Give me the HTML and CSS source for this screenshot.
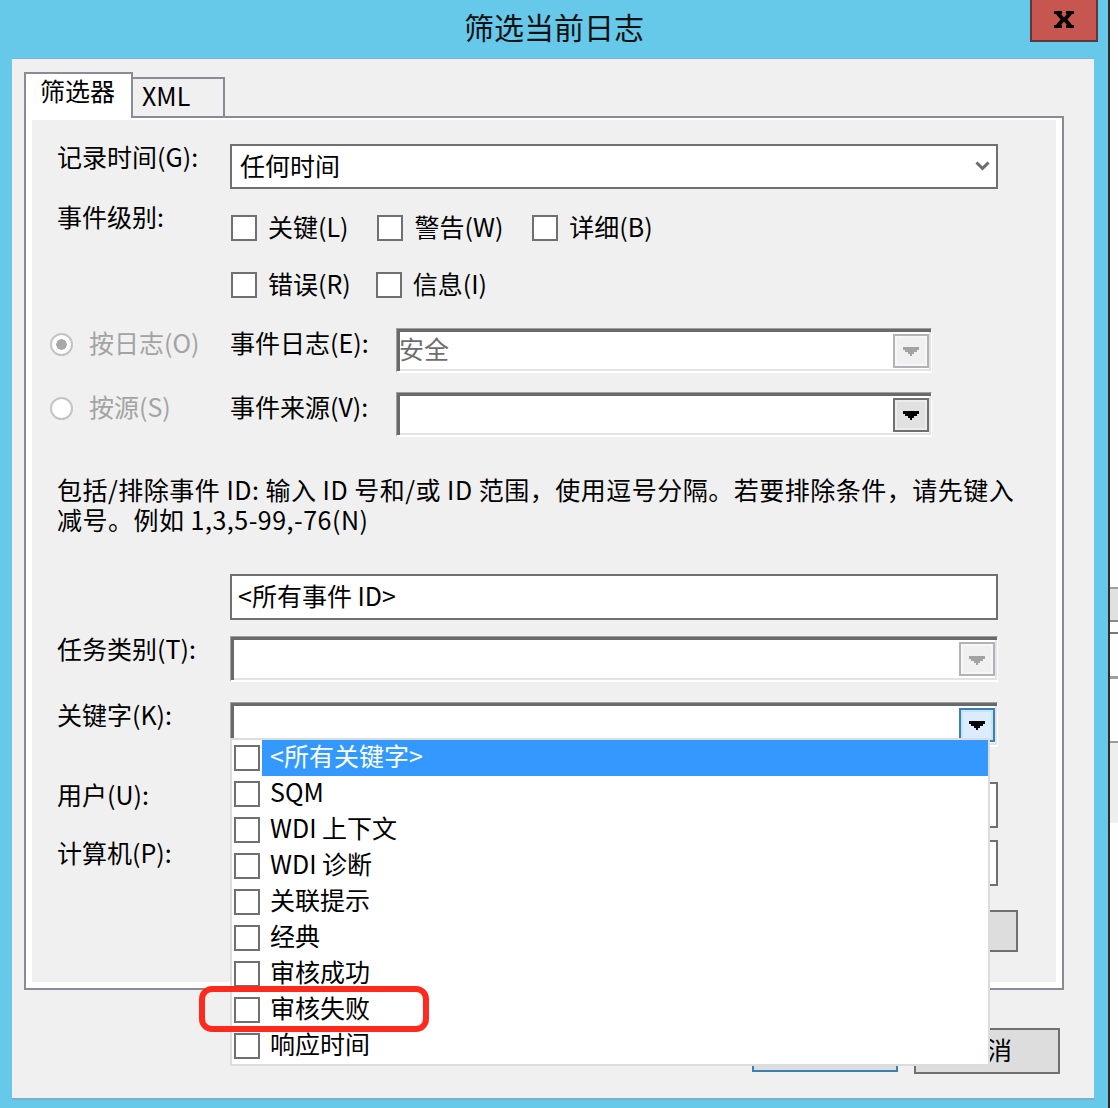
FILE: index.html
```html
<!DOCTYPE html>
<html lang="zh-CN">
<head>
<meta charset="utf-8">
<title>筛选当前日志</title>
<link rel="stylesheet" href="styles.css">
</head>
<body>
<div class="screen">
  <div class="window">
    <div class="titlebar">
      <div class="title">筛选当前日志</div>
      <div class="close">
        <svg width="20" height="17" viewBox="0 0 20 17"><path d="M0 0h8v3h-1l3 3.5 3-3.5h-1v-3h8v3h-2l-4.5 5.5 4.5 5.5h2v3h-8v-3h1l-3-3.5-3 3.5h1v3h-8v-3h2l4.5-5.5-4.5-5.5h-2z" fill="#000"/></svg>
      </div>
    </div>
    <div class="frame">
      <div class="client">
        <div class="tabs">
          <div class="tab active">筛选器</div>
          <div class="tab xml">XML</div>
        </div>
        <div class="panel">
          <div class="content">
            <div class="row r-time">
              <div class="lbl">记录时间(G):</div>
              <div class="combo">
                <span class="val">任何时间</span>
                <svg class="chev" width="15" height="11" viewBox="0 0 15 11"><path d="M1.5 1.5l6 6 6-6" stroke="#6a6a6a" stroke-width="3" fill="none"/></svg>
              </div>
            </div>
            <div class="row r-level">
              <div class="lbl">事件级别:</div>
              <div class="checks">
                <div class="checkline">
                  <div class="chk"><span class="box"></span><span class="ct">关键(L)</span></div>
                  <div class="chk"><span class="box"></span><span class="ct">警告(W)</span></div>
                  <div class="chk"><span class="box"></span><span class="ct">详细(B)</span></div>
                </div>
                <div class="checkline second">
                  <div class="chk"><span class="box"></span><span class="ct">错误(R)</span></div>
                  <div class="chk"><span class="box"></span><span class="ct">信息(I)</span></div>
                </div>
              </div>
            </div>
            <div class="row r-log">
              <div class="radio"><span class="dot checked"></span><span class="ct">按日志(O)</span></div>
              <div class="lbl2">事件日志(E):</div>
              <div class="sunken small">
                <span class="val dis">安全</span>
                <span class="ddbtn off"><svg width="16" height="9" viewBox="0 0 16 9"><path d="M0 0h16v3h-2v2h-3v2h-2v2h-2v-2h-2v-2h-3v-2h-2z" fill="#a3a3a3"/></svg></span>
              </div>
            </div>
            <div class="row r-src">
              <div class="radio"><span class="dot"></span><span class="ct">按源(S)</span></div>
              <div class="lbl2">事件来源(V):</div>
              <div class="sunken small">
                <span class="val"></span>
                <span class="ddbtn"><svg width="16" height="9" viewBox="0 0 16 9"><path d="M0 0h16v3h-2v2h-3v2h-2v2h-2v-2h-2v-2h-3v-2h-2z" fill="#000"/></svg></span>
              </div>
            </div>
            <p class="hint">包括/排除事件 ID: 输入 ID 号和/或 ID 范围，使用逗号分隔。若要排除条件，请先键入<br>减号。例如 1,3,5-99,-76(N)</p>
            <div class="row r-id">
              <div class="lbl"></div>
              <div class="input"><span class="val">&lt;所有事件 ID&gt;</span></div>
            </div>
            <div class="row r-task">
              <div class="lbl">任务类别(T):</div>
              <div class="sunken wide">
                <span class="val"></span>
                <span class="ddbtn off"><svg width="16" height="9" viewBox="0 0 16 9"><path d="M0 0h16v3h-2v2h-3v2h-2v2h-2v-2h-2v-2h-3v-2h-2z" fill="#a3a3a3"/></svg></span>
              </div>
            </div>
            <div class="row r-kw">
              <div class="lbl">关键字(K):</div>
              <div class="kwrap">
                <div class="sunken wide kw">
                  <span class="val"></span>
                  <span class="ddbtn hot"><svg width="16" height="9" viewBox="0 0 16 9"><path d="M0 0h16v3h-2v2h-3v2h-2v2h-2v-2h-2v-2h-3v-2h-2z" fill="#000"/></svg></span>
                </div>
                <div class="droplist">
                  <div class="item"><span class="box"></span><span class="txt sel">&lt;所有关键字&gt;</span></div>
                  <div class="item"><span class="box"></span><span class="txt">SQM</span></div>
                  <div class="item"><span class="box"></span><span class="txt">WDI 上下文</span></div>
                  <div class="item"><span class="box"></span><span class="txt">WDI 诊断</span></div>
                  <div class="item"><span class="box"></span><span class="txt">关联提示</span></div>
                  <div class="item"><span class="box"></span><span class="txt">经典</span></div>
                  <div class="item"><span class="box"></span><span class="txt">审核成功</span></div>
                  <div class="item"><span class="box"></span><span class="txt">审核失败</span></div>
                  <div class="item"><span class="box"></span><span class="txt">响应时间</span></div>
                  <div class="mark"></div>
                </div>
              </div>
            </div>
            <div class="row r-user">
              <div class="lbl">用户(U):</div>
              <div class="input"></div>
            </div>
            <div class="row r-pc">
              <div class="lbl">计算机(P):</div>
              <div class="input"></div>
            </div>
            <div class="row r-clear">
              <div class="btn clear"><span class="ct">清除(A)</span></div>
            </div>
          </div>
        </div>
        <div class="buttons">
          <div class="btn default"><span class="ct">确定</span></div>
          <div class="btn"><span class="ct">取消</span></div>
        </div>
      </div>
    </div>
  </div>
  <div class="divider"></div>
  <div class="behind">
    <div class="bh-top"></div>
    <div class="bh-block"></div>
    <div class="bh-line l1"></div>
    <div class="bh-gap g1"></div>
    <div class="bh-line l2"></div>
    <div class="bh-gap g2"></div>
    <div class="bh-line l3"></div>
    <div class="bh-gap g3"></div>
    <div class="bh-line l4"></div>
    <div class="bh-block2"></div>
  </div>
</div>
</body>
</html>
```
FILE: styles.css
```css
* { box-sizing: border-box; }
html, body { margin: 0; padding: 0; }
body {
  font-family: "Noto Sans CJK SC", "Microsoft YaHei", sans-serif;
  font-size: 25px;
  color: #000;
  background: #fff;
}
.screen { display: flex; width: 1118px; height: 1108px; overflow: hidden; }
.window {
  flex: none;
  width: 1108px;
  height: 1108px;
  background: #66c9ea;
  display: flex;
  flex-direction: column;
}
.titlebar {
  flex: none;
  height: 58px;
  display: grid;
  grid-template-columns: 1fr auto 1fr;
}
.title {
  grid-column: 2;
  font-size: 30px;
  line-height: 52px;
  color: #111;
}
.close {
  grid-column: 3;
  justify-self: end;
  align-self: start;
  width: 68px;
  height: 42px;
  margin-right: 10px;
  background: #c75650;
  border: 2px solid #5a3a3a;
  border-top: none;
  display: flex;
  align-items: center;
  justify-content: center;
  padding-bottom: 1px;
}
.frame { flex: 1; display: flex; padding: 0 14px 8px 12px; }
.client {
  flex: 1;
  background: #f0f0f0;
  border-top: 1px solid #7db4cf;
  border-bottom: 2px solid #78b0cb;
  padding: 13px 30px 24px 12px;
  display: flex;
  flex-direction: column;
}
.tabs { flex: none; height: 44px; display: flex; align-items: flex-end; }
.tab { border: 2px solid #898c95; border-bottom: none; line-height: 30px; }
.tab.active {
  width: 109px;
  height: 46px;
  margin-bottom: -2px;
  background: #fff;
  position: relative;
  z-index: 1;
  padding: 1px 0 0 14px;
}
.tab.xml {
  width: 92px;
  height: 39px;
  border-left: none;
  background: #f0f0f0;
  padding: 1px 0 0 9px;
}
.panel {
  flex: none;
  height: 874px;
  border: 2px solid #898c95;
  background: #fff;
  padding: 2px 6px 6px 6px;
}
.content {
  height: 100%;
  background: #f0f0f0;
  display: flex;
  flex-direction: column;
  padding: 24px 0 0 25px;
  position: relative;
}
.row { flex: none; display: flex; align-items: flex-start; }
.lbl { flex: none; width: 173px; line-height: 24px; }
.lbl2 { flex: none; width: 166px; line-height: 24px; padding-top: 2px; }
.val { line-height: 30px; white-space: nowrap; padding-bottom: 4px; }
.ct { line-height: 30px; padding-bottom: 4px; white-space: nowrap; }

.combo, .input {
  width: 768px;
  height: 46px;
  border: 2px solid #707070;
  background: #fff;
  display: flex;
  align-items: center;
  justify-content: space-between;
  padding: 0 6px 0 8px;
}
.combo { height: 45px; }
.input { padding-left: 6px; }

.r-level { margin-top: 15px; }
.checks { padding-top: 6px; display: flex; flex-direction: column; gap: 21px; margin-left: 1px; }
.checkline { height: 36px; display: flex; align-items: center; gap: 29px; }
.checkline.second { gap: 25px; }
.chk { display: flex; align-items: center; gap: 11px; }
.box {
  flex: none;
  width: 26px;
  height: 26px;
  border: 2px solid #707070;
  background: #fff;
}

.r-log { margin-top: 25px; }
.r-src { margin-top: 19px; }
.radio {
  flex: none;
  width: 180px;
  margin-left: -7px;
  margin-top: 1px;
  height: 30px;
  display: flex;
  align-items: center;
  gap: 16px;
  color: #a3a3a3;
}
.dot {
  flex: none;
  width: 23px;
  height: 23px;
  border-radius: 50%;
  border: 2px solid #c4c4c4;
  background: #fff;
}
.dot.checked { background: radial-gradient(circle, #a8a8a8 0 5px, #fff 5.5px); }

.sunken {
  height: 45px;
  background: #fff;
  border-style: solid;
  border-width: 1px 1px 2px 1px;
  border-color: #a0a0a0 #fff #fff #a0a0a0;
  box-shadow: inset 3px 3px 0 #696969, inset -2px -2px 0 #e3e3e3;
  display: flex;
  align-items: center;
  justify-content: space-between;
  padding: 0 2px 0 4px;
}
.sunken.small { width: 536px; }
.sunken.wide { width: 768px; height: 46px; }
.sunken.kw { height: 45px; }
.val.dis { color: #6d6d6d; margin-left: -2px; }
.ddbtn {
  flex: none;
  width: 36px;
  height: 34px;
  margin-top: 1px;
  border: 2px solid #707070;
  background: #e1e1e1;
  box-shadow: inset 0 0 0 2px #ececec;
  display: flex;
  align-items: center;
  justify-content: center;
  padding-top: 2px;
}
.ddbtn.off { border-color: #b0b4b8; background: #f0f0f0; box-shadow: inset 0 0 0 2px #f6f6f6; }
.ddbtn.hot { border-color: #3c7fb1; background: #dcecfc; box-shadow: inset 0 0 0 2px #c4e5f6; }

.hint { margin: 37px 0 0 0; line-height: 30px; letter-spacing: 0.5px; }
.r-id { margin-top: 40px; }
.r-task { margin-top: 16px; }
.r-kw { margin-top: 20px; }
.kwrap { position: relative; }
.r-user { margin-top: 35px; }
.r-pc { margin-top: 12px; }
.r-clear { margin-top: 24px; justify-content: flex-end; padding-right: 38px; }

.droplist {
  position: absolute;
  left: 0;
  top: 36px;
  width: 760px;
  height: 328px;
  background: #fff;
  border: 2px solid #dcdcdc;
  z-index: 5;
  display: flex;
  flex-direction: column;
}
.item { flex: none; height: 36px; display: flex; align-items: center; }
.item .box { margin-left: 2px; }
.txt {
  flex: 1;
  height: 36px;
  margin-left: 2px;
  padding-left: 8px;
  line-height: 30px;
  white-space: nowrap;
}
.txt.sel { background: #3399ff; color: #fff; }
.mark {
  position: absolute;
  left: -33px;
  top: 246px;
  width: 230px;
  height: 46px;
  border: 6px solid #ff2a1e;
  border-radius: 13px;
}

.btn {
  flex: none;
  width: 146px;
  height: 46px;
  border: 2px solid #707070;
  background: #dddddd;
  display: flex;
  align-items: center;
  justify-content: center;
}
.btn.clear { width: 160px; height: 42px; padding-right: 24px; }
.btn.default { border-color: #3c7fb1; height: 44px; }
.buttons {
  flex: none;
  margin-top: 38px;
  padding-right: 4px;
  display: flex;
  justify-content: flex-end;
  align-items: flex-start;
  gap: 16px;
}

.divider { flex: none; width: 2px; background: #2b2b2b; }
.behind { flex: 1; background: #fff; display: flex; flex-direction: column; }
.bh-top { height: 587px; }
.bh-block { height: 33px; background: #e1e1e1; border-top: 2px solid #a0a0a0; }
.bh-line { background: #8a8a8a; }
.l1 { height: 2px; }
.l2 { height: 2px; background: #777; }
.l3 { height: 3px; background: #a0a0a0; }
.l4 { height: 2px; background: #999; }
.g1 { height: 10px; }
.g2 { height: 42px; }
.g3 { height: 62px; }
.bh-block2 { height: 80px; background: #eeeeee; }
```
